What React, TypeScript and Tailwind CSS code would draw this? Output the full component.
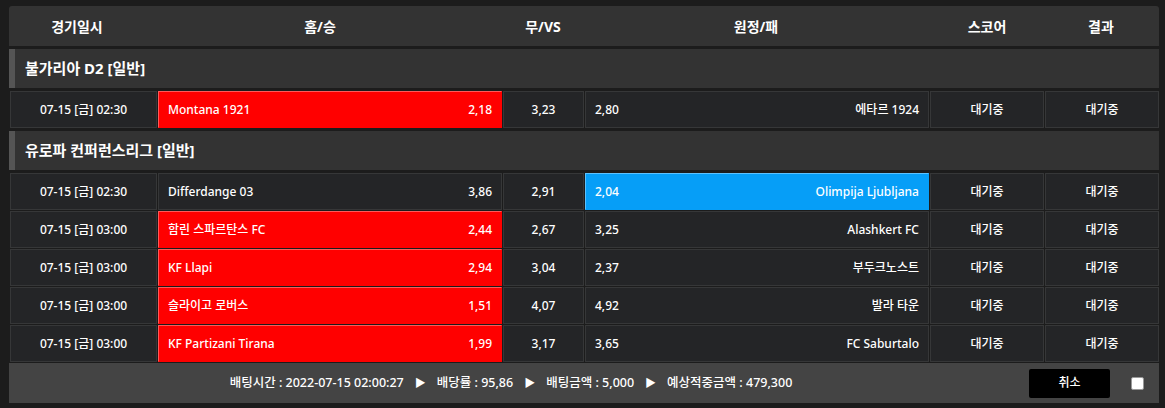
type Match = {
  time: string;
  home: string;
  homeOdd: string;
  draw: string;
  awayOdd: string;
  away: string;
  pick: "home" | "away";
};

type Group = { title: string; matches: Match[] };

const GROUPS: Group[] = [
  {
    title: "불가리아 D2 [일반]",
    matches: [
      { time: "07-15 [금] 02:30", home: "Montana 1921", homeOdd: "2,18", draw: "3,23", awayOdd: "2,80", away: "에타르 1924", pick: "home" },
    ],
  },
  {
    title: "유로파 컨퍼런스리그 [일반]",
    matches: [
      { time: "07-15 [금] 02:30", home: "Differdange 03", homeOdd: "3,86", draw: "2,91", awayOdd: "2,04", away: "Olimpija Ljubljana", pick: "away" },
      { time: "07-15 [금] 03:00", home: "함린 스파르탄스 FC", homeOdd: "2,44", draw: "2,67", awayOdd: "3,25", away: "Alashkert FC", pick: "home" },
      { time: "07-15 [금] 03:00", home: "KF Llapi", homeOdd: "2,94", draw: "3,04", awayOdd: "2,37", away: "부두크노스트", pick: "home" },
      { time: "07-15 [금] 03:00", home: "슬라이고 로버스", homeOdd: "1,51", draw: "4,07", awayOdd: "4,92", away: "발라 타운", pick: "home" },
      { time: "07-15 [금] 03:00", home: "KF Partizani Tirana", homeOdd: "1,99", draw: "3,17", awayOdd: "3,65", away: "FC Saburtalo", pick: "home" },
    ],
  },
];

const cell = "h-[37px] flex items-center border border-[#363738] bg-[#242527]";
const red = "h-[37px] flex items-center border border-[#ff0000] border-t-[#ff5a5a] border-l-[#ff5a5a] bg-[#ff0000]";
const blue = "h-[37px] flex items-center border border-[#069ef7] border-t-[#5cc2ff] border-l-[#5cc2ff] bg-[#069ef7]";

function Row({ m }: { m: Match }) {
  return (
    <div className="flex gap-px pl-px">
      <div className={`${cell} w-[147px] justify-center`}>{m.time}</div>
      <div className={`${m.pick === "home" ? red : cell} w-[344px] justify-between px-[9px]`}>
        <span>{m.home}</span>
        <span>{m.homeOdd}</span>
      </div>
      <div className={`${cell} w-[81px] justify-center`}>{m.draw}</div>
      <div className={`${m.pick === "away" ? blue : cell} w-[344px] justify-between px-[9px]`}>
        <span>{m.awayOdd}</span>
        <span>{m.away}</span>
      </div>
      <div className={`${cell} w-[114px] justify-center`}>대기중</div>
      <div className={`${cell} w-[114px] justify-center`}>대기중</div>
    </div>
  );
}

export default function App() {
  return (
    <div
      className="w-[1165px] h-[408px] overflow-hidden bg-[#1c1c1c] pl-[9px] pt-[6px] text-white text-[12px] font-medium"
      style={{ fontFamily: '"Noto Sans", "Noto Sans CJK KR", sans-serif' }}
    >
      <div className="w-[1150px]">
        <div className="flex h-[40px] items-center rounded-t-[3px] bg-[#333333] text-[14px] font-bold">
          <div className="w-[136px] text-center">경기일시</div>
          <div className="w-[350px] text-center">홈/승</div>
          <div className="w-[96px] text-center">무/VS</div>
          <div className="w-[330px] text-center">원정/패</div>
          <div className="w-[132px] text-center">스코어</div>
          <div className="w-[96px] text-center">결과</div>
        </div>

        {GROUPS.map((g) => (
          <div key={g.title}>
            <div className="mt-[3px] flex h-[39px] items-center bg-[#333333]">
              <div className="h-full w-[6px] bg-[#555555]" />
              <div className="pl-[10px] text-[15px] font-bold">{g.title}</div>
            </div>
            <div className="mt-[3px] mb-[1px] flex flex-col gap-px">
              {g.matches.map((m, i) => (
                <Row key={i} m={m} />
              ))}
            </div>
          </div>
        ))}

        <div className="mt-[1px] flex h-[40px] items-center bg-[#444444]">
          <div className="flex flex-1 items-center justify-center gap-[11px] pr-[16px] text-[12.5px]">
            <span>배팅시간 : 2022-07-15 02:00:27</span>
            <span className="text-[11px]">▶</span>
            <span>배당률 : 95,86</span>
            <span className="text-[11px]">▶</span>
            <span>배팅금액 : 5,000</span>
            <span className="text-[11px]">▶</span>
            <span>예상적중금액 : 479,300</span>
          </div>
          <button className="flex h-[29px] w-[81px] items-center justify-center rounded-[2px] bg-black text-[12px]">
            취소
          </button>
          <div className="ml-[21px] mr-[15px] h-[13px] w-[13px] rounded-[2px] border border-[#999] bg-white" />
        </div>
      </div>
    </div>
  );
}
